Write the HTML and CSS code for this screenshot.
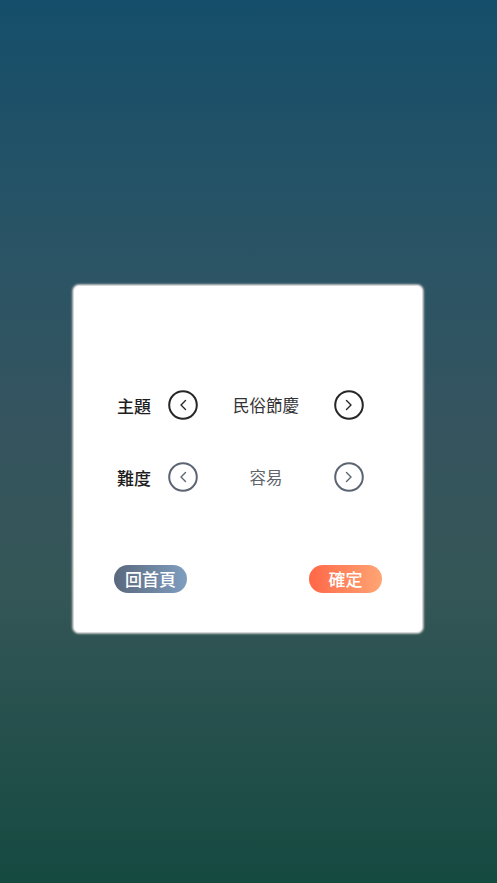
FILE: index.html
```html
<!DOCTYPE html>
<html lang="zh-Hant">
<head>
<meta charset="utf-8">
<title>設定</title>
<link rel="stylesheet" href="styles.css">
</head>
<body>
<main class="screen">
  <section class="card">
    <div class="rows">
      <div class="row">
        <span class="label">主題</span>
        <button class="arrow dark" aria-label="上一個">
          <svg viewBox="0 0 30 30"><circle cx="15" cy="15" r="13.8"/><path d="M17.5 10.5 L13 15 L17.5 19.5"/></svg>
        </button>
        <span class="value dark">民俗節慶</span>
        <button class="arrow dark" aria-label="下一個">
          <svg viewBox="0 0 30 30"><circle cx="15" cy="15" r="13.8"/><path d="M12.5 10.5 L17 15 L12.5 19.5"/></svg>
        </button>
      </div>
      <div class="row">
        <span class="label">難度</span>
        <button class="arrow gray" aria-label="上一個">
          <svg viewBox="0 0 30 30"><circle cx="15" cy="15" r="13.8"/><path d="M17.5 10.5 L13 15 L17.5 19.5"/></svg>
        </button>
        <span class="value gray">容易</span>
        <button class="arrow gray" aria-label="下一個">
          <svg viewBox="0 0 30 30"><circle cx="15" cy="15" r="13.8"/><path d="M12.5 10.5 L17 15 L12.5 19.5"/></svg>
        </button>
      </div>
    </div>
    <div class="actions">
      <button class="pill home">回首頁</button>
      <button class="pill ok">確定</button>
    </div>
  </section>
</main>
</body>
</html>
```

FILE: styles.css
```css
* { box-sizing: border-box; }
html, body { margin: 0; height: 100%; }
body {
  font-family: "Noto Sans CJK TC", "Noto Sans", sans-serif;
  background: linear-gradient(180deg, #154e6a 0%, #2a5465 28%, #35545f 48%, #355657 66%, #154a41 100%);
}
.screen {
  min-height: 100%;
  display: flex;
  justify-content: flex-start;
  align-items: flex-start;
  padding-top: 285px;
  padding-left: 73px;
}
.card {
  width: 350px;
  height: 348px;
  background: #fff;
  border-radius: 6px;
  border: 1px solid #d6d6d6;
  box-shadow: 0 0 2px 1px rgba(205, 205, 205, 0.9);
  display: flex;
  flex-direction: column;
  padding: 104px 40px 39px 40px;
}
.rows {
  display: flex;
  flex-direction: column;
  gap: 42px;
  padding: 0 18px 0 4px;
}
.row {
  display: grid;
  grid-template-columns: 34px 30px 1fr 30px;
  column-gap: 16px;
  align-items: center;
  height: 30px;
}
.label {
  font-size: 17px;
  font-weight: 500;
  color: #1e1e1e;
  line-height: 1;
  white-space: nowrap;
  margin-left: -1px;
}
.value {
  font-size: 16.5px;
  text-align: center;
  line-height: 1;
  white-space: nowrap;
}
.value.dark { color: #333; }
.value.gray { color: #60646b; }
.arrow {
  width: 30px;
  height: 30px;
  padding: 0;
  border: 0;
  background: none;
  display: block;
}
.arrow svg { width: 30px; height: 30px; display: block; fill: none; stroke-width: 2; stroke-linecap: round; stroke-linejoin: round; }
.arrow svg path { stroke-width: 1.4; }
.arrow.dark svg { stroke: #262626; }
.arrow.gray svg { stroke: #5b6472; }
.actions {
  margin-top: auto;
  display: flex;
  justify-content: space-between;
}
.pill {
  width: 73px;
  height: 28px;
  border: 0;
  border-radius: 14px;
  color: #fff;
  font-family: "Noto Sans CJK TC", "Noto Sans", sans-serif;
  font-size: 17px;
  font-weight: 500;
  padding: 0;
  line-height: 28px;
}
.home { background: linear-gradient(90deg, #5a687c, #7f9ec0); }
.ok { background: linear-gradient(90deg, #ff6747, #ffa574); }
```
